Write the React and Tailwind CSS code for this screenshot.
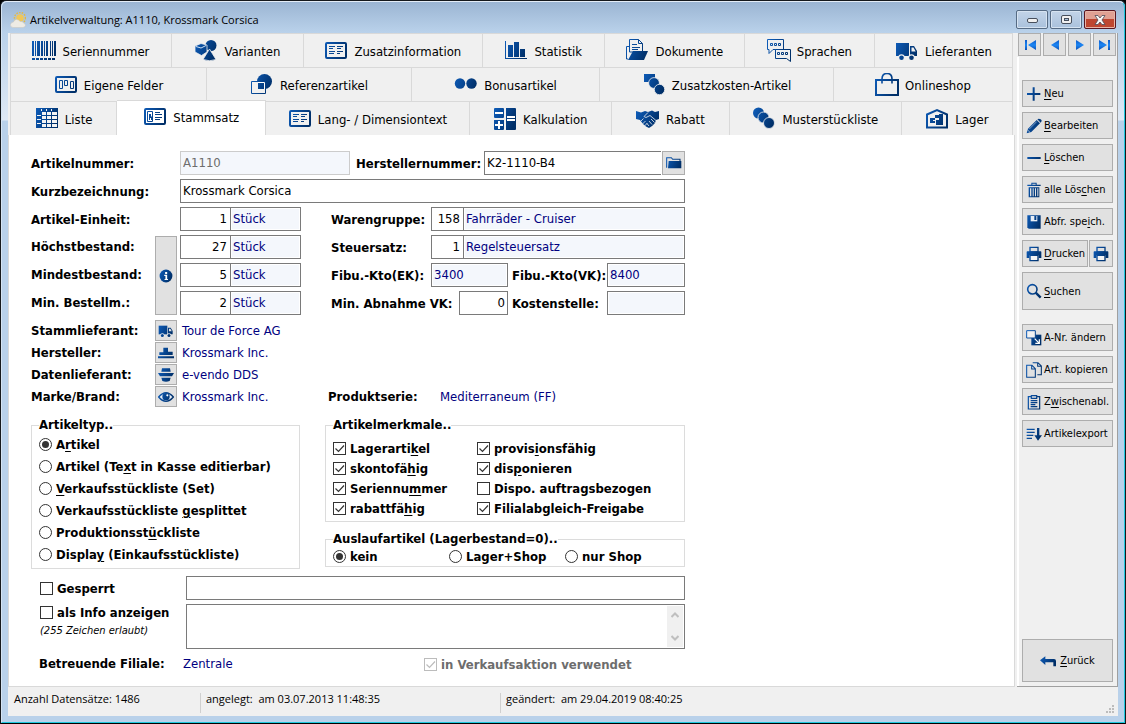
import React from 'react';
import clsx from 'clsx';

const BLUE = 'url(#iconBlue)';

const GradientDefs = () => (
  <svg className="absolute h-0 w-0" aria-hidden="true">
    <defs>
      <linearGradient id="iconBlue" gradientUnits="userSpaceOnUse" x1="0" y1="0" x2="24" y2="10">
        <stop offset="0" stopColor="#0f5fbe" />
        <stop offset="1" stopColor="#002f68" />
      </linearGradient>
      <linearGradient id="navBlue" gradientUnits="userSpaceOnUse" x1="0" y1="0" x2="0" y2="12">
        <stop offset="0" stopColor="#0a50c0" />
        <stop offset="0.5" stopColor="#1c86f4" />
        <stop offset="1" stopColor="#0846ac" />
      </linearGradient>
    </defs>
  </svg>
);

const truck = (
  <>
    <path d="M1 4h13v13H1z" fill={BLUE} />
    <path d="M15 7h4l3 5v5h-7zM16.500 8.500v4h4.200l-2.200-4z" fill={BLUE} fillRule="evenodd" />
    <circle cx="6.500" cy="18.500" r="3.200" fill="#f0f0f0" />
    <circle cx="6.500" cy="18.800" r="2.300" fill={BLUE} />
    <circle cx="16.500" cy="18.500" r="3.200" fill="#f0f0f0" />
    <circle cx="16.500" cy="18.800" r="2.300" fill={BLUE} />
  </>
);

const textPage = (
  <>
    <rect x="2" y="4" width="20" height="15" rx="1" fill="none" stroke={BLUE} strokeWidth="2" />
    <path
      d="M5 7.500h6M5 9.500h4M5 12.500h6M5 14.500h5M13 7.500h6M13 9.500h4M13 12.500h6M13 14.500h3"
      stroke={BLUE}
      fill="none"
    />
  </>
);

const printer = (
  <>
    <path d="M5 1h14v9H5zM7 3v5h10V3z" fill={BLUE} fillRule="evenodd" />
    <path d="M2 8h20a1 1 0 011 1v9h-4v-4H5v4H1V9a1 1 0 011-1z" fill={BLUE} />
    <path d="M6 14h12v8H6z" fill="#f4f4f4" stroke={BLUE} strokeWidth="2" />
  </>
);

const icons = {
  barcode: (
    <>
      <path
        d="M0 2h2v15H0zM3 2h1v15H3zM5 2h3v15H5zM9 2h2v15H9zM12 2h1v15h-1zM14 2h2v15h-2zM18 2h1v15h-1zM20 2h1v15h-1zM22 2h2v15h-2z"
        fill={BLUE}
      />
      <path d="M0 20h24" stroke={BLUE} strokeWidth="2" strokeDasharray="3 1" fill="none" />
    </>
  ),
  variants: (
    <>
      <circle cx="17" cy="6.500" r="5.500" fill={BLUE} />
      <path d="M1 7l6-2.500L13 6v7l-5.500 3.500L1 13z" fill={BLUE} stroke="#f0f0f0" strokeWidth="0.800" />
      <path d="M2 7.500l5 1.500 5-2.500" stroke="#cfe0f3" fill="none" />
      <path d="M15.500 10L22 20.500q-6.500 2.500-13 0z" fill={BLUE} stroke="#f0f0f0" strokeWidth="0.800" />
    </>
  ),
  textPage,
  chart: (
    <path d="M1 2h1v17h21v1H1zM4 6h5v12H4zM10 3h5v15h-5zM16 10h5v8h-5z" fill={BLUE} />
  ),
  documents: (
    <>
      <path d="M4.500 0.500h9l4 4V13h-13z" fill="#f0f0f0" stroke={BLUE} />
      <path d="M13.500 .5v4h4M7 5.500h5M7 8.500h8M7 10.500h6" stroke={BLUE} fill="none" />
      <path d="M4 7.500H1.500V20H3" stroke={BLUE} fill="none" />
      <path d="M8 12h15l-4 9H3z" fill={BLUE} />
    </>
  ),
  speech: (
    <>
      <path d="M0.500 0.500h16v10H6l-4 4v-4H0.500z" fill="#f0f0f0" stroke={BLUE} />
      <path d="M8.500 10.500h15v12l-4-3h-11z" fill="#f0f0f0" stroke={BLUE} />
      <path
        d="M3.500 4.500h2v2h-2zM7.500 4.500h2v2h-2zM11.500 4.500h2v2h-2zM10.500 13.500h2v2h-2zM14.500 13.500h2v2h-2zM18.500 13.500h2v2h-2z"
        stroke={BLUE}
        fill="none"
      />
    </>
  ),
  truck,
  fields: (
    <>
      <rect x="2" y="4" width="20" height="15" rx="1" fill="none" stroke={BLUE} strokeWidth="2" />
      <path d="M5.500 7.500h3v8h-3zM10.500 7.500h3v5h-3zM16.500 8.500h3v7h-3z" stroke={BLUE} fill="none" />
    </>
  ),
  reference: (
    <>
      <circle cx="14.500" cy="8.500" r="7.500" fill={BLUE} />
      <path d="M2 9h13v12H2z" fill="#f0f0f0" />
      <path d="M8 9h7v7H8z" fill={BLUE} />
      <path d="M1.500 8.500h14v12h-14z" fill="none" stroke={BLUE} />
      <path d="M8 9.500h6.500V16" fill="none" stroke="#fff" />
    </>
  ),
  bonus: (
    <>
      <circle cx="6" cy="10.500" r="5.200" fill={BLUE} />
      <circle cx="17.500" cy="10.500" r="5.200" fill={BLUE} />
    </>
  ),
  extraCost: (
    <>
      <path d="M2 1h11v8H2z" fill={BLUE} />
      <circle cx="12" cy="10" r="5.400" fill={BLUE} stroke="#f0f0f0" strokeWidth="0.800" />
      <circle cx="17.500" cy="16.500" r="5.200" fill={BLUE} stroke="#f0f0f0" strokeWidth="0.800" />
    </>
  ),
  bag: (
    <>
      <path d="M1 7h22v15H1z" fill="none" stroke={BLUE} strokeWidth="2" />
      <path d="M7 10.500V6q0-5.500 5-5.500T17 6v4.500" fill="none" stroke={BLUE} strokeWidth="1.600" />
    </>
  ),
  table: (
    <>
      <path d="M1 1h22v20H1z" fill={BLUE} />
      <path
        d="M7 5h4v3H7zM12 5h4v3h-4zM17 5h5v3h-5zM7 9h4v3H7zM12 9h4v3h-4zM17 9h5v3h-5zM7 13h4v3H7zM12 13h4v3h-4zM17 13h5v3h-5zM7 17h4v3H7zM12 17h4v3h-4zM17 17h5v3h-5zM2 8h4v1H2zM2 12h4v1H2zM2 16h4v1H2zM6 2h1v2H6zM11 2h1v2h-1zM16 2h1v2h-1z"
        fill="#f4f4f4"
      />
    </>
  ),
  card: (
    <>
      <rect x="2" y="4" width="20" height="15" rx="1" fill="none" stroke={BLUE} strokeWidth="2" />
      <path d="M4.500 6.500h5v10h-5z" fill="none" stroke={BLUE} />
      <path d="M6 9h2v2l1 1v3H8v-2H7v2H6z" fill={BLUE} />
      <path d="M12 7.500h5M12 9.500h7M12 12.500h7M12 14.500h5" stroke={BLUE} fill="none" />
    </>
  ),
  calc: (
    <>
      <path
        d="M1 2a1 1 0 011-1h8a1 1 0 011 1v8a1 1 0 01-1 1H2a1 1 0 01-1-1zM1 13h10v9a1 1 0 01-1 1H2a1 1 0 01-1-1zM13 1h9a1 1 0 011 1v20a1 1 0 01-1 1h-9z"
        fill={BLUE}
      />
      <path d="M2 5h8v2H2zM5 14h2v3h3v2H7v3H5v-3H2v-2h3zM14 9h8v2h-8zM14 12h8v2h-8z" fill="#fff" />
    </>
  ),
  handshake: (
    <>
      <path
        d="M0 4l5 1.500L9 4l3 1 4-1.500 3 1.500L23 4v8l-3 1-1 3-3 3-3 2-3-1.500-3-2.500-3-4-4-1z"
        fill={BLUE}
      />
      <path
        d="M12 5.500L8 9.500q2 2 4 0l2-1 6 5M15 12l3.500 3.500M13 14l3 3.500M10.500 16l2.500 3M4.500 14.500l3-3M6.500 17l3-3M8.500 19l2.500-2.500"
        fill="none"
        stroke="#f0f0f0"
        strokeWidth="0.800"
      />
    </>
  ),
  circles: (
    <>
      <circle cx="6.500" cy="6" r="5.500" fill={BLUE} />
      <circle cx="11.500" cy="10.500" r="5.500" fill={BLUE} stroke="#f0f0f0" strokeWidth="0.800" />
      <circle cx="17" cy="16" r="5.500" fill={BLUE} stroke="#f0f0f0" strokeWidth="0.800" />
    </>
  ),
  warehouse: (
    <>
      <path d="M2 20.500V7.500L12 3l10 4.500v13z" fill="none" stroke={BLUE} strokeWidth="2" />
      <path d="M10 8h4v3h-4zM14 7h4v4h-4zM5 11h5v5H5zM11 13h7v5h-7zM14 11h4v4h-4z" fill={BLUE} />
      <path d="M10 11h4v2h-4zM8 13h2v1H8z" fill="#f0f0f0" />
    </>
  ),
  plus: <path d="M10 2h3v8.500h8.500v3H13V22h-3v-8.500H1.500v-3H10z" fill={BLUE} />,
  pencil: (
    <>
      <path d="M1 23l2-7L16 3l5 5L8 21z" fill={BLUE} />
      <path d="M17 2q2-2 5 0t0 5z" fill={BLUE} />
      <path d="M5 16.500L16 5.500" stroke="#e1e1e1" strokeWidth="0.800" fill="none" />
      <path d="M2.500 18l3.500 3.500" stroke="#e1e1e1" fill="none" />
    </>
  ),
  minus: <path d="M2 10.500h20v3H2z" fill={BLUE} />,
  trash: (
    <path
      d="M8 1h8v3h6v2H2V4h6zM9.500 2.500V4h5V2.500zM4 8h16v15H4zM6 9.500v12h2v-12zM10 9.500v12h1.500v-12zM13.500 9.500v12H15v-12zM17 9.500v12h1.500v-12z"
      fill={BLUE}
      fillRule="evenodd"
    />
  ),
  disk: (
    <>
      <path d="M2 2h20v20H4l-2-2z" fill={BLUE} />
      <path d="M7 3h10v8H7z" fill="#e8eef6" />
      <path d="M12.500 3h3v6h-3z" fill={BLUE} />
    </>
  ),
  printer,
  search: (
    <>
      <circle cx="9.500" cy="9.500" r="7" fill="none" stroke={BLUE} strokeWidth="2.400" />
      <path d="M14.500 14.500l7.500 7.500" stroke={BLUE} strokeWidth="3.600" fill="none" />
    </>
  ),
  resize: (
    <>
      <path d="M8 7h15v16H8z" fill={BLUE} />
      <path d="M1 1h13v11H1z" fill="#f2f2f2" stroke={BLUE} strokeWidth="1.500" />
      <path d="M13 13l7 7M20 14v6h-6" stroke="#fff" strokeWidth="1.800" fill="none" />
    </>
  ),
  copy: (
    <path
      d="M10 1h8l5 5v13h-6M17.500 1v5.500H23M1 5h8l5 5v13H1zM8.500 5v5.500H14"
      fill="none"
      stroke={BLUE}
      strokeWidth="1.600"
    />
  ),
  clipboard: (
    <path
      d="M8 4H3.500v18.500h17V4H16M8 2.500h8v4H8zM7 10h10M7 13h10M7 16h7M7 19h10"
      fill="none"
      stroke={BLUE}
      strokeWidth="1.800"
    />
  ),
  exportList: (
    <>
      <path d="M1 5h12M1 9.500h12M1 14h10M1 18.500h8" stroke={BLUE} strokeWidth="2" fill="none" />
      <path d="M16.500 3H20v11h4l-6 8-5.500-8h4z" fill={BLUE} />
    </>
  ),
  back: <path d="M0 11l8-6v4h13a3 3 0 013 3v8h-4v-6H8v4z" fill={BLUE} />,
  info: (
    <>
      <circle cx="12" cy="12" r="11" fill={BLUE} />
      <path d="M10.500 5h3.500v3.500h-3.500zM9 10h5v7h1.500v2h-6v-2H11v-5H9z" fill="#fff" />
    </>
  ),
  folder: (
    <>
      <path d="M1 19V4h7l2 2.500h11V9" fill="none" stroke={BLUE} strokeWidth="1.600" />
      <path d="M4 9h19v11H3z" fill={BLUE} />
    </>
  ),
  factory: <path d="M8 4h7v6h7v5H2v-4h6zM0 17h24v3H0z" fill={BLUE} />,
  supplier: (
    <path d="M6 2h12l1 5H5zM0 9h24l-3 5H3zM5 16h14l-1.500 5q-5.500 2-11 0z" fill={BLUE} />
  ),
  eye: (
    <>
      <path d="M1 12q11-13 22 0-11 13-22 0z" fill="#e8eef6" stroke={BLUE} strokeWidth="2.200" />
      <circle cx="12" cy="11.500" r="5.500" fill={BLUE} />
      <circle cx="14" cy="9.500" r="1.600" fill="#fff" />
    </>
  ),
};

const Icon = ({ name, className = 'h-6 w-6' }) => (
  <svg viewBox="0 0 24 24" className={clsx('shrink-0', className)} aria-hidden="true">
    {icons[name]}
  </svg>
);

// The character after "&" is the keyboard shortcut
const Mnemonic = ({ text }) => {
  const at = text.indexOf('&');
  if (at < 0) return <span className="pt-0.5">{text}</span>;
  return (
    <span className="pt-0.5">
      {text.slice(0, at)}
      <u className="underline-offset-2">{text[at + 1]}</u>
      {text.slice(at + 2)}
    </span>
  );
};

const tabRows = [
  [
    { label: 'Seriennummer', icon: 'barcode', size: 'flex-[161]' },
    { label: 'Varianten', icon: 'variants', size: 'flex-[132]' },
    { label: 'Zusatzinformation', icon: 'textPage', size: 'flex-[179]' },
    { label: 'Statistik', icon: 'chart', size: 'flex-[122]' },
    { label: 'Dokumente', icon: 'documents', size: 'flex-[140]' },
    { label: 'Sprachen', icon: 'speech', size: 'flex-[130]' },
    { label: 'Lieferanten', icon: 'truck', size: 'flex-[138]' },
  ],
  [
    { label: 'Eigene Felder', icon: 'fields', size: 'flex-[196]' },
    { label: 'Referenzartikel', icon: 'reference', size: 'flex-[205]' },
    { label: 'Bonusartikel', icon: 'bonus', size: 'flex-[188]' },
    { label: 'Zusatzkosten-Artikel', icon: 'extraCost', size: 'flex-[234]' },
    { label: 'Onlineshop', icon: 'bag', size: 'flex-[179]' },
  ],
  [
    { label: 'Liste', icon: 'table', size: 'flex-[106]' },
    { label: 'Stammsatz', icon: 'card', size: 'flex-[149]', active: true },
    { label: 'Lang- / Dimensiontext', icon: 'textPage', size: 'flex-[204]' },
    { label: 'Kalkulation', icon: 'calc', size: 'flex-[142]' },
    { label: 'Rabatt', icon: 'handshake', size: 'flex-[118]' },
    { label: 'Musterstückliste', icon: 'circles', size: 'flex-[172]' },
    { label: 'Lager', icon: 'warehouse', size: 'flex-[111]' },
  ],
];

const Tabs = () => (
  <nav className="ml-0.5 mr-0.5 border-l border-t border-[#d9d9d9]">
    {tabRows.map((row, i) => (
      <div key={i} className="flex h-[34px]">
        {row.map((tab) => (
          <button
            key={tab.label}
            type="button"
            className={clsx(
              'flex min-w-0 items-center justify-center gap-1.5 whitespace-nowrap border-r border-[#d9d9d9] text-[13px]',
              tab.size,
              tab.active ? '-mt-0.5 border-t bg-white pb-1' : 'border-b'
            )}
          >
            <Icon name={tab.icon} />
            <span className="pt-0.5">{tab.label}</span>
          </button>
        ))}
      </div>
    ))}
  </nav>
);

const TitleBar = () => (
  <header className="flex h-[31px] items-start pl-2 pr-2">
    <svg viewBox="0 0 16 16" className="mt-2.5 h-4 w-4" aria-hidden="true">
      <circle cx="10" cy="6" r="5.500" fill="none" stroke="#e8b93c" strokeWidth="1.500" strokeDasharray="1.500 1.200" />
      <circle cx="10" cy="6" r="3.800" fill="#efc75a" />
      <path
        d="M3 15.500q-3-.5-2.500-3T3.500 10q.5-2.500 3-2.500t3.500 2q3-.5 3.500 1.500 2 .5 2 2.300t-2.500 2.200z"
        fill="#eeebe4"
        stroke="#c9c6be"
        strokeWidth="0.500"
      />
    </svg>
    <h1 className="ml-1 mt-[9px] flex-1 font-['Open_Sans','Noto_Sans',sans-serif] text-[11px] leading-[18px]">
      Artikelverwaltung: A1110, Krossmark Corsica
    </h1>
    <div className="mt-2 flex gap-0.5">
      <button
        type="button"
        aria-label="Minimieren"
        className="grid h-[19px] w-8 place-items-center rounded-xs border border-[#566b84] bg-linear-to-b from-[#c3d4e8] to-[#a9c1dc] shadow-[inset_0_0_0_1px_#d6e3f1]"
      >
        <span className="mt-0.5 h-[5px] w-[11px] rounded-xs border border-[#474f5c] bg-[#f0f0f0]" />
      </button>
      <button
        type="button"
        aria-label="Maximieren"
        className="grid h-[19px] w-8 place-items-center rounded-xs border border-[#566b84] bg-linear-to-b from-[#c3d4e8] to-[#a9c1dc] shadow-[inset_0_0_0_1px_#d6e3f1]"
      >
        <span className="grid h-[9px] w-[11px] place-items-center rounded-xs border border-[#474f5c] bg-[#f0f0f0]">
          <span className="h-[3px] w-[5px] border border-[#474f5c] bg-[#a9c1dc]" />
        </span>
      </button>
      <button
        type="button"
        aria-label="Schließen"
        className="grid h-[19px] w-8 place-items-center rounded-xs border border-[#5a1620] bg-linear-to-b from-[#e0a093] from-45% to-[#be4630] to-50% shadow-[inset_0_0_0_1px_#e8b5a8]"
      >
        <svg viewBox="0 0 12 10" className="h-2.5 w-3" aria-hidden="true">
          <path
            d="M1 .5h3L6 3l2-2.500h3L8 5l3 4.500H8L6 7 4 9.500H1L4 5z"
            fill="#f8f8f8"
            stroke="#4c4a56"
            strokeWidth="0.800"
          />
        </svg>
      </button>
    </div>
  </header>
);

const actions = [
  { label: '&Neu', icon: 'plus' },
  { label: '&Bearbeiten', icon: 'pencil' },
  { label: '&Löschen', icon: 'minus' },
  { label: 'alle Lös&chen', icon: 'trash' },
  { label: 'Abfr. spe&ich.', icon: 'disk' },
];

const articleActions = [
  { label: 'A-Nr. ändern', icon: 'resize' },
  { label: 'Art. kopieren', icon: 'copy' },
  { label: 'Z&wischenabl.', icon: 'clipboard' },
  { label: 'Artikelexport', icon: 'exportList' },
];

const SideButton = ({ label, icon, className = 'h-[27px]' }) => (
  <button
    type="button"
    className={clsx(
      'flex w-full items-center gap-0.5 whitespace-nowrap border border-[#adadad] bg-[#e1e1e1] pl-[3px] text-[11px]',
      className
    )}
  >
    <Icon name={icon} className="h-4 w-4" />
    <Mnemonic text={label} />
  </button>
);

const navButtons = [
  { label: 'Erster Datensatz', path: 'M1 1h2v10H1zM12 1v10L4 6z' },
  { label: 'Vorheriger Datensatz', path: 'M10 1v10L2 6z' },
  { label: 'Nächster Datensatz', path: 'M2 1v10l8-5z' },
  { label: 'Letzter Datensatz', path: 'M0 1v10l8-5zM9 1h2v10H9z' },
];

const Sidebar = () => (
  <aside className="flex w-[101px] shrink-0 flex-col border-b border-r border-[#a0a0a0]">
    <div className="flex gap-0.5 pl-px">
      {navButtons.map((nav) => (
        <button
          key={nav.label}
          type="button"
          aria-label={nav.label}
          className="grid h-[23px] w-[23px] place-items-center border border-[#adadad] bg-[#e1e1e1]"
        >
          <svg viewBox="0 0 12 12" className="h-3 w-3" aria-hidden="true">
            <path d={nav.path} fill="url(#navBlue)" />
          </svg>
        </button>
      ))}
    </div>
    <div className="mt-px flex flex-1 flex-col border-l-2 border-white pb-1 pl-[3px] pr-1 pt-[23px]">
      <div className="flex flex-col gap-[5px]">
        {actions.map((action) => (
          <SideButton key={action.label} {...action} />
        ))}
        <div className="flex gap-px">
          <SideButton label="&Drucken" icon="printer" />
          <button
            type="button"
            aria-label="Schnelldruck"
            className="grid h-[27px] w-6 shrink-0 place-items-center border border-[#adadad] bg-[#e1e1e1]"
          >
            <Icon name="printer" className="h-4 w-4" />
          </button>
        </div>
        <SideButton label="&Suchen" icon="search" className="h-[38px]" />
      </div>
      <div className="mt-3.5 flex flex-col gap-[5px]">
        {articleActions.map((action) => (
          <SideButton key={action.label} {...action} />
        ))}
      </div>
      <button
        type="button"
        className="mt-auto flex h-[43px] w-full items-center justify-center gap-1 border border-[#adadad] bg-[#e1e1e1] text-[11px]"
      >
        <Icon name="back" className="h-4 w-4" />
        <Mnemonic text="&Zurück" />
      </button>
    </div>
  </aside>
);

const labelBase = 'pt-0.5 font-bold';
const inputBase = 'h-6 min-w-0 border border-[#7a7a7a] px-0.5 pb-px text-[13px] outline-none';
const lookup = 'bg-[#f4f7fc] text-[#000080] shadow-[inset_0_0_0_1px_#fff]';

const NumberWithText = ({ id, value, text, numberWidth, className }) => (
  <div className={clsx('flex min-w-0', className)}>
    <input id={id} defaultValue={value} className={clsx(inputBase, 'bg-white pr-[3px] text-right', numberWidth)} />
    <input
      aria-label={`${id} Text`}
      defaultValue={text}
      readOnly
      className={clsx(inputBase, lookup, '-ml-px flex-1')}
    />
  </div>
);

const stocks = [
  { id: 'hoechstbestand', label: 'Höchstbestand:', value: '27' },
  { id: 'mindestbestand', label: 'Mindestbestand:', value: '5' },
  { id: 'minbestellm', label: 'Min. Bestellm.:', value: '2' },
];

const partners = [
  { label: 'Stammlieferant:', value: 'Tour de Force AG', icon: 'truck' },
  { label: 'Hersteller:', value: 'Krossmark Inc.', icon: 'factory' },
  { label: 'Datenlieferant:', value: 'e-vendo DDS', icon: 'supplier' },
  { label: 'Marke/Brand:', value: 'Krossmark Inc.', icon: 'eye' },
];

const articleTypes = [
  'A&rtikel',
  'Artikel (Te&xt in Kasse editierbar)',
  '&Verkaufsstückliste (Set)',
  'Verkaufsstückliste &gesplittet',
  'Produktionsst&ückliste',
  'Displa&y (Einkaufsstückliste)',
];

const features = [
  { label: 'Lagerarti&kel', checked: true },
  { label: 'provis&ionsfähig', checked: true },
  { label: 'skontofä&hig', checked: true },
  { label: 'dis&ponieren', checked: true },
  { label: 'Seriennu&mmer', checked: true },
  { label: 'Dispo. auftragsbezogen', checked: false },
  { label: 'rabattfä&hig', checked: true },
  { label: 'Filialabgleich-Freigabe', checked: true },
];

const Check = ({ label, checked, disabled, className }) => (
  <label className={clsx('flex items-center gap-1 font-bold', disabled && 'text-[#6d6d6d]', className)}>
    <span className="grid h-[13px] w-[13px] shrink-0">
      <input
        type="checkbox"
        defaultChecked={checked}
        disabled={disabled}
        className="peer h-[13px] w-[13px] appearance-none border border-[#333] bg-white [grid-area:1/1] disabled:border-[#bcbcbc]"
      />
      <svg
        viewBox="0 0 13 13"
        className="pointer-events-none hidden h-[13px] w-[13px] text-[#333] [grid-area:1/1] peer-checked:block peer-disabled:text-[#bcbcbc]"
        aria-hidden="true"
      >
        <path d="M2.500 6.500l3 3 5.500-6" fill="none" stroke="currentColor" strokeWidth="1.200" />
      </svg>
    </span>
    <Mnemonic text={label} />
  </label>
);

const Radio = ({ name, label, checked, className }) => (
  <label className={clsx('flex items-center gap-1 font-bold', className)}>
    <input
      type="radio"
      name={name}
      defaultChecked={checked}
      className="grid h-[13px] w-[13px] shrink-0 appearance-none place-content-center rounded-full border border-[#333] bg-white before:h-[7px] before:w-[7px] before:rounded-full checked:before:bg-[#333]"
    />
    <Mnemonic text={label} />
  </label>
);

const MasterData = () => (
  <form className="w-[654px] text-[13px] leading-4">
    <div className="flex flex-col gap-1">
      <div className="flex items-center">
        <label htmlFor="artikelnummer" className={clsx(labelBase, 'w-[149px]')}>Artikelnummer:</label>
        <input
          id="artikelnummer"
          defaultValue="A1110"
          disabled
          className="h-6 w-[170px] border border-[#ccc] bg-[#f4f7fc] px-0.5 pb-px text-[13px] text-[#6d6d6d]"
        />
        <label htmlFor="herstellernummer" className={clsx(labelBase, 'w-[134px] pl-1.5')}>Herstellernummer:</label>
        <input
          id="herstellernummer"
          defaultValue="K2-1110-B4"
          className={clsx(inputBase, 'flex-1 border-r-0 bg-white')}
        />
        <button
          type="button"
          aria-label="Öffnen"
          className="ml-px grid h-6 w-[23px] place-items-center border border-[#adadad] bg-[#e1e1e1]"
        >
          <Icon name="folder" className="h-4 w-4" />
        </button>
      </div>
      <div className="flex items-center">
        <label htmlFor="kurzbezeichnung" className={clsx(labelBase, 'w-[149px]')}>Kurzbezeichnung:</label>
        <input id="kurzbezeichnung" defaultValue="Krossmark Corsica" className={clsx(inputBase, 'flex-1 bg-white')} />
      </div>

      <div className="flex gap-[30px]">
        {/* Stock quantities */}
        <div className="flex w-[270px] shrink-0 flex-col gap-1">
          <div className="flex items-center">
            <label htmlFor="artikeleinheit" className={clsx(labelBase, 'w-[149px]')}>Artikel-Einheit:</label>
            <NumberWithText id="artikeleinheit" value="1" text="Stück" numberWidth="w-[51px]" className="w-[121px]" />
          </div>
          <div className="flex">
            <div className="flex w-[124px] flex-col gap-1.5">
              {stocks.map((stock) => (
                <label key={stock.id} htmlFor={stock.id} className={clsx(labelBase, 'h-[22px] leading-5')}>
                  {stock.label}
                </label>
              ))}
            </div>
            <button
              type="button"
              aria-label="Info"
              className="mt-px grid w-[22px] place-items-center border border-[#adadad] bg-[#e1e1e1]"
            >
              <Icon name="info" className="h-3.5 w-3.5" />
            </button>
            <div className="ml-[3px] flex flex-col gap-1">
              {stocks.map((stock) => (
                <NumberWithText
                  key={stock.id}
                  id={stock.id}
                  value={stock.value}
                  text="Stück"
                  numberWidth="w-[51px]"
                  className="w-[121px]"
                />
              ))}
            </div>
          </div>
        </div>

        {/* Accounting */}
        <div className="flex min-w-0 flex-1 flex-col gap-1">
          <div className="flex items-center">
            <label htmlFor="warengruppe" className={clsx(labelBase, 'w-[100px]')}>Warengruppe:</label>
            <NumberWithText id="warengruppe" value="158" text="Fahrräder - Cruiser" numberWidth="w-[33px]" className="flex-1" />
          </div>
          <div className="flex items-center">
            <label htmlFor="steuersatz" className={clsx(labelBase, 'w-[100px]')}>Steuersatz:</label>
            <NumberWithText id="steuersatz" value="1" text="Regelsteuersatz" numberWidth="w-[33px]" className="flex-1" />
          </div>
          <div className="flex items-center">
            <label htmlFor="fibuek" className={clsx(labelBase, 'w-[100px]')}>Fibu.-Kto(EK):</label>
            <input id="fibuek" defaultValue="3400" className={clsx(inputBase, lookup, 'w-[77px]')} />
            <label htmlFor="fibuvk" className={clsx(labelBase, 'w-[99px] pl-1')}>Fibu.-Kto(VK):</label>
            <input id="fibuvk" defaultValue="8400" className={clsx(inputBase, lookup, 'flex-1')} />
          </div>
          <div className="flex items-center">
            <label htmlFor="minabnahme" className={clsx(labelBase, 'w-32')}>Min. Abnahme VK:</label>
            <input id="minabnahme" defaultValue="0" className={clsx(inputBase, 'w-[49px] bg-white text-right')} />
            <label htmlFor="kostenstelle" className={clsx(labelBase, 'w-[99px] pl-1')}>Kostenstelle:</label>
            <input id="kostenstelle" className={clsx(inputBase, lookup, 'flex-1')} />
          </div>
        </div>
      </div>
    </div>

    {/* Suppliers and brand */}
    <div className="mt-[5px] flex items-end">
      <div className="flex w-[297px] flex-col gap-px">
        {partners.map((partner) => (
          <div key={partner.label} className="flex h-[21px] items-center">
            <span className="w-[124px] font-bold">{partner.label}</span>
            <button
              type="button"
              aria-label={partner.label}
              className="grid h-[21px] w-[22px] place-items-center border border-[#adadad] bg-[#e1e1e1]"
            >
              <Icon name={partner.icon} className="h-4 w-4" />
            </button>
            <span className="pl-[5px] text-[#000080]">{partner.value}</span>
          </div>
        ))}
      </div>
      <div className="flex h-[21px] items-center">
        <span className="w-28 font-bold">Produktserie:</span>
        <span className="text-[#000080]">Mediterraneum (FF)</span>
      </div>
    </div>

    <div className="mt-2.5 flex items-start gap-[25px]">
      <fieldset className="h-[152px] w-[269px] border border-[#dcdcdc] px-[7px]">
        <legend className="font-bold">Artikeltyp..</legend>
        <div className="mt-0.5 flex flex-col gap-1">
          {articleTypes.map((type, i) => (
            <Radio key={type} name="artikeltyp" label={type} checked={i === 0} />
          ))}
        </div>
      </fieldset>
      <div className="flex flex-1 flex-col gap-[9px]">
        <fieldset className="border border-[#dcdcdc] px-[7px] pb-1">
          <legend className="font-bold">Artikelmerkmale..</legend>
          <div className="mt-1.5 grid grid-cols-[144px_1fr] gap-y-0.5">
            {features.map((feature) => (
              <Check key={feature.label} {...feature} />
            ))}
          </div>
        </fieldset>
        <fieldset className="border border-[#dcdcdc] px-[7px] pb-px">
          <legend className="font-bold">Auslaufartikel (Lagerbestand=0)..</legend>
          <div className="flex">
            <Radio name="auslauf" label="kein" checked className="w-[116px]" />
            <Radio name="auslauf" label="Lager+Shop" className="w-[116px]" />
            <Radio name="auslauf" label="nur Shop" />
          </div>
        </fieldset>
      </div>
    </div>

    {/* Lock and note */}
    <div className="mt-[7px] flex pl-[9px]">
      <div className="flex w-[146px] flex-col">
        <Check label="Gesperrt" className="h-6" />
        <Check label="als Info anzeigen" className="h-6" />
        <span className="text-[11px] italic leading-[14px]">(255 Zeichen erlaubt)</span>
      </div>
      <div className="flex flex-1 flex-col gap-1">
        <input aria-label="Sperrgrund" className={clsx(inputBase, 'bg-white')} />
        <div className="flex h-[45px] border border-[#7a7a7a] p-px">
          <textarea aria-label="Infotext" className="min-w-0 flex-1 resize-none overflow-hidden outline-none" />
          <div className="flex w-4 flex-col items-center justify-between bg-[#f0f0f0] py-1.5">
            <svg viewBox="0 0 8 6" className="h-1.5 w-2" aria-hidden="true">
              <path d="M.5 5L4 1.500 7.500 5" fill="none" stroke="#bfbfbf" strokeWidth="2" />
            </svg>
            <svg viewBox="0 0 8 6" className="h-1.5 w-2" aria-hidden="true">
              <path d="M.5 1L4 4.500 7.500 1" fill="none" stroke="#bfbfbf" strokeWidth="2" />
            </svg>
          </div>
        </div>
      </div>
    </div>
    <div className="mt-1.5 flex items-center pl-2">
      <span className="w-36 font-bold">Betreuende Filiale:</span>
      <span className="w-[241px] text-[#000080]">Zentrale</span>
      <Check label="in Verkaufsaktion verwendet" checked disabled />
    </div>
  </form>
);

const StatusBar = () => (
  <footer className="flex h-[29px] items-start pt-1.5 font-['Open_Sans','Noto_Sans',sans-serif] text-[11px]">
    <span className="h-5 w-48 pl-1.5 leading-3">Anzahl Datensätze: 1486</span>
    <span className="h-5 w-[300px] whitespace-pre border-l border-[#d0d0d0] pl-[5px] leading-3">
      {'angelegt:  am 03.07.2013 11:48:35'}
    </span>
    <span className="h-5 flex-1 whitespace-pre border-l border-[#d0d0d0] pl-[5px] leading-3">
      {'geändert:  am 29.04.2019 08:40:25'}
    </span>
    <svg viewBox="0 0 8 8" className="mr-1 mt-3 h-2 w-2" aria-hidden="true">
      <path d="M6 0h2v2H6zM3 3h2v2H3zM6 3h2v2H6zM0 6h2v2H0zM3 6h2v2H3zM6 6h2v2H6z" fill="#bcbcbc" />
    </svg>
  </footer>
);

export default function App() {
  return (
    <div className="min-h-screen bg-black font-['DejaVu_Sans_Condensed','DejaVu_Sans',sans-serif] text-[13px] text-black">
      <GradientDefs />
      <div className="flex min-h-screen flex-col rounded-t-md border border-[#15181c] border-b-black bg-[linear-gradient(#9ab4d2_0px,#b9d1ea_31px,#dfe9f5_119px,#b9d1ea_120px)]">
        <div className="flex flex-1 flex-col rounded-t-md border border-b-[#1fc8de] border-l-[#d5e4f3] border-r-[#1fc8de] border-t-[#e4edf7]">
          <TitleBar />
          <div className="mx-1.5 mb-1.5 flex flex-1 flex-col bg-[#f0f0f0]">
            <div className="flex flex-1 gap-0.5">
              <div className="flex min-w-0 flex-1 flex-col">
                <Tabs />
                <main className="-mt-px flex-1 border border-t-0 border-[#d9d9d9] bg-white pl-[22px] pt-4">
                  <MasterData />
                </main>
              </div>
              <Sidebar />
            </div>
            <StatusBar />
          </div>
        </div>
      </div>
    </div>
  );
}
